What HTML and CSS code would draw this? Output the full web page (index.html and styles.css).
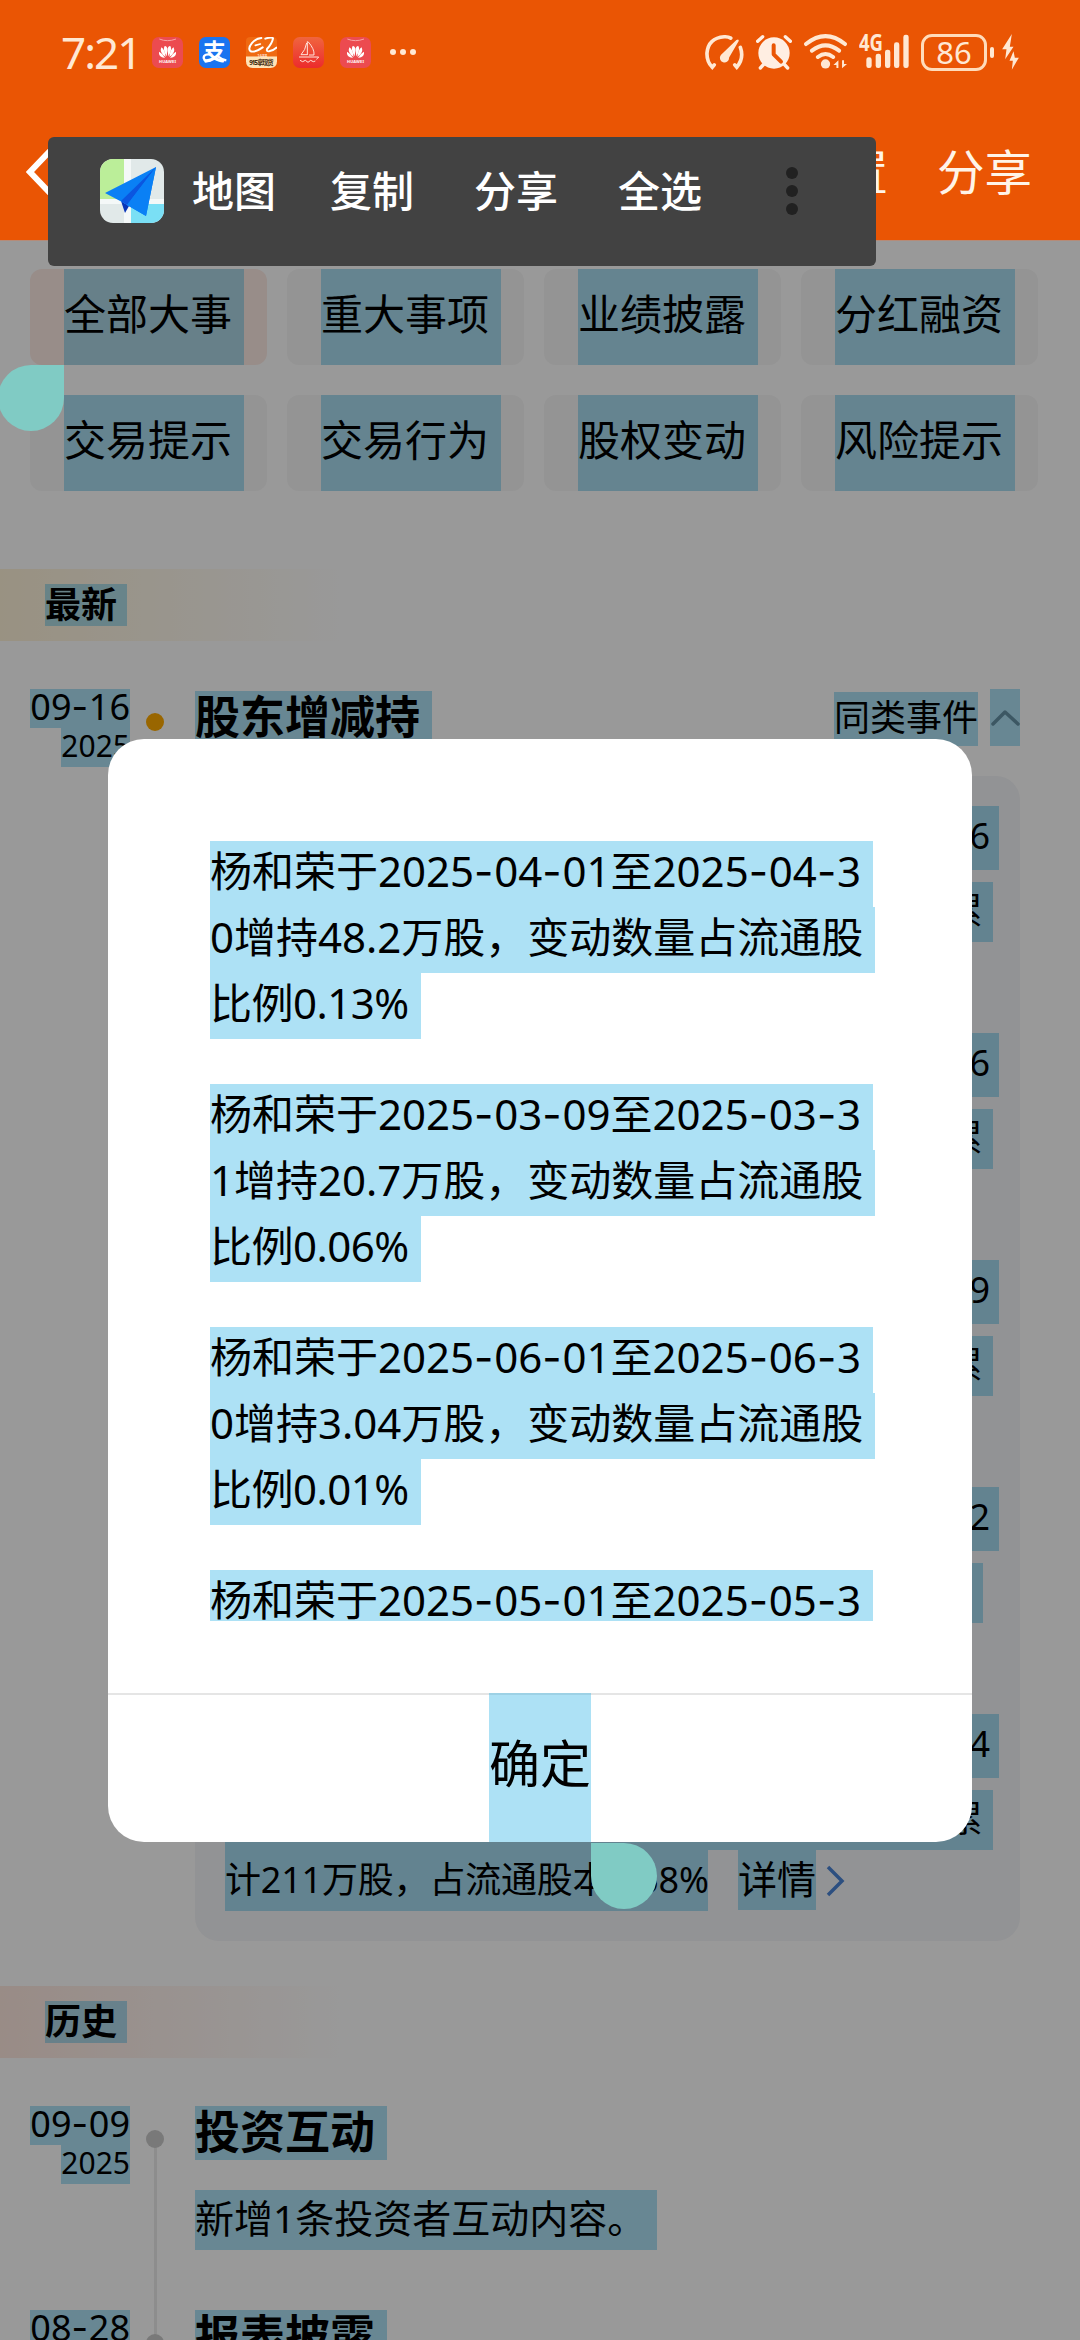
FILE: index.html
```
<!DOCTYPE html>
<html lang="zh-CN">

<head>
    <meta charset="UTF-8" />
    <meta name="viewport" content="width=device-width, initial-scale=1.0" />
    <title>大事提醒</title>
    <link rel="stylesheet" href="styles.css">
</head>

<body>
    <header class="header">
        <div class="status-bar">
            <div class="status-left">
                <span class="clock">7:21</span>
                <svg class="app-icon" viewBox="0 0 93 93">
                    <rect width="93" height="93" rx="20" fill="#ec4b50" />
                    <path d="M22 6q24 10 50 0" fill="none" stroke="#f9a5a5" stroke-width="3" />
                    <g fill="#fff">
                        <path d="M44 58Q31 38 38 27q9 0 8 14zM49 58Q62 38 55 27q-9 0-8 14z" />
                        <path d="M41 60Q21 47 28 31q10 5 13 29zM52 60Q72 47 65 31q-10 5-13 29z" />
                        <path d="M39 63Q18 60 21 44q11 5 18 19zM54 63Q75 60 72 44q-11 5-18 19z" />
                    </g>
                    <text x="21" y="79" font-size="12" font-weight="bold" fill="#fff" textLength="51">HUAWEI</text>
                </svg>
                <svg class="app-icon" viewBox="0 0 93 93">
                    <rect width="93" height="93" rx="20" fill="#1a74f0" />
                    <text x="12" y="70" font-size="68" font-weight="bold" fill="#fff">支</text>
                    <path d="M40 54Q14 48 14 63q3 14 25 5M52 55q15 12 30 15" fill="none" stroke="#fff" stroke-width="7" />
                </svg>
                <svg class="app-icon" viewBox="0 0 93 93">
                    <path d="M0 58h93v15q0 20-20 20H20Q0 93 0 73z" fill="#ffe3b8" />
                    <path d="M0 12Q0 0 14 0h65q14 0 14 12v46H0z" fill="#ef6a12" />
                    <g fill="none" stroke="#fff" stroke-linecap="round">
                        <path d="M46 3C24 4 4 30 12 41q10 9 38-10" stroke-width="6" />
                        <path d="M28 25l15-4" stroke-width="5" />
                        <path d="M58 5q20-6 23-1-2 14-18 32-2 8 6 7 12-2 22-11" stroke-width="6" />
                    </g>
                    <text x="34" y="59" font-size="13" fill="#fff">1688</text>
                    <text x="10" y="83" font-size="19" font-weight="bold" fill="#402a10" textLength="73">915拿现货</text>
                </svg>
                <svg class="app-icon" viewBox="0 0 93 93">
                    <defs>
                        <linearGradient id="boat" x2="0" y2="1">
                            <stop stop-color="#f0653f" />
                            <stop offset="1" stop-color="#ec2b2c" />
                        </linearGradient>
                    </defs>
                    <rect width="93" height="93" rx="20" fill="url(#boat)" />
                    <path d="M43 13v41M41 18Q37 40 24 53h19M45 14q20 22 18 40H48M18 60h59q-3 5-7 7M21 70l8 4 8-4 8 6 8-6 8 4 6-2" fill="none" stroke="#ffe4dc" stroke-width="3" />
                </svg>
                <svg class="app-icon" viewBox="0 0 93 93">
                    <rect width="93" height="93" rx="20" fill="#ec4b50" />
                    <path d="M22 6q24 10 50 0" fill="none" stroke="#f9a5a5" stroke-width="3" />
                    <g fill="#fff">
                        <path d="M44 58Q31 38 38 27q9 0 8 14zM49 58Q62 38 55 27q-9 0-8 14z" />
                        <path d="M41 60Q21 47 28 31q10 5 13 29zM52 60Q72 47 65 31q-10 5-13 29z" />
                        <path d="M39 63Q18 60 21 44q11 5 18 19zM54 63Q75 60 72 44q-11 5-18 19z" />
                    </g>
                    <text x="21" y="79" font-size="12" font-weight="bold" fill="#fff" textLength="51">HUAWEI</text>
                </svg>
                <svg class="more-dots" width="26" height="6" viewBox="0 0 26 6" fill="#ffe8d3">
                    <circle cx="3" cy="3" r="3" />
                    <circle cx="13" cy="3" r="3" />
                    <circle cx="23" cy="3" r="3" />
                </svg>
            </div>
            <div class="status-right">
                <svg width="39" height="36" viewBox="0 0 118 108">
                    <g fill="none" stroke="#ffe8d3" stroke-width="11" stroke-linecap="round">
                        <path d="M28 93l-6 7Q5 83 6 57 10 12 58 8q12-1 20 4" />
                        <path d="M107 40q12 33-11 60l-6-7" />
                    </g>
                    <path d="M95 18q8-5 7 3L73 71a14 14 0 1 1-25-8z" fill="#ffe8d3" />
                </svg>
                <svg width="36" height="36" viewBox="0 0 108 108">
                    <g stroke="#ffeee2" stroke-width="10" stroke-linecap="round">
                        <path d="M5 22L20 8M103 22L88 8M24 90l-11 12M84 90l11 12" />
                    </g>
                    <circle cx="54" cy="57" r="47" fill="#ffeee2" />
                    <path d="M53 34v27l22 22" fill="none" stroke="#ea5504" stroke-width="12" stroke-linecap="round" stroke-linejoin="round" />
                </svg>
                <svg width="43" height="36" viewBox="0 0 130 108">
                    <g fill="none" stroke="#ffe8d3" stroke-width="12" stroke-linecap="round">
                        <path d="M6 30Q65-18 124 30M24 50q41-32 82 0M42 69q23-18 46 0" />
                    </g>
                    <circle cx="65" cy="90" r="14" fill="#ffe8d3" />
                    <path d="M89 93l15-14v23h-6v-9zM130 90l-15 13V79h6v11z" fill="#ffe8d3" />
                </svg>
                <svg width="50" height="36" viewBox="0 0 150 108" fill="#ffe8d3">
                    <text x="0" y="52" font-size="70" font-weight="bold" textLength="72" lengthAdjust="spacingAndGlyphs">4G</text>
                    <rect x="22" y="70" width="16" height="32" rx="7" />
                    <rect x="50" y="59" width="16" height="43" rx="7" />
                    <rect x="78" y="47" width="16" height="55" rx="7" />
                    <rect x="105" y="25" width="16" height="77" rx="7" />
                    <rect x="133" y="2" width="16" height="100" rx="7" />
                </svg>
                <div class="battery">
                    <span class="battery-level">86</span>
                    <span class="battery-nub"></span>
                </div>
                <svg class="bolt" width="17" height="36" viewBox="0 0 50 108" fill="#ffe8d3">
                    <path d="M29 0L0 46h13L9 76l25-38H23z" />
                    <path d="M34 52L22 80h10l-3 27 21-36H38z" />
                </svg>
            </div>
        </div>
        <nav class="nav-bar">
            <svg class="back" width="24" height="46" viewBox="0 0 24 46">
                <path d="M24 2L4 23l20 21" fill="none" stroke="#fff" stroke-width="6" />
            </svg>
            <div class="nav-links">
                <span>设置</span>
                <span>分享</span>
            </div>
        </nav>
    </header>

    <main class="page">
        <div class="chips">
            <div class="chip active"><span class="sel">全部大事</span></div>
            <div class="chip"><span class="sel">重大事项</span></div>
            <div class="chip"><span class="sel">业绩披露</span></div>
            <div class="chip"><span class="sel">分红融资</span></div>
            <div class="chip"><span class="sel">交易提示</span></div>
            <div class="chip"><span class="sel">交易行为</span></div>
            <div class="chip"><span class="sel">股权变动</span></div>
            <div class="chip"><span class="sel">风险提示</span></div>
        </div>

        <h2 class="band latest"><span class="sel">最新</span></h2>
        <section class="event">
            <div class="date">
                <span class="sel day">09<i class="dash">-</i>16</span>
                <span class="sel year">2025</span>
            </div>
            <div class="rail"><span class="dot"></span></div>
            <div class="event-body">
                <div class="event-head">
                    <h3 class="sel title">股东增减持</h3>
                    <div class="similar">
                        <span class="sel similar-label">同类事件</span>
                        <span class="sel similar-arrow">
                            <svg width="30" height="20" viewBox="0 0 30 20">
                                <path d="M3 16L15 4l13 12" fill="none" stroke="#6592a5" stroke-width="3.5" stroke-linecap="round" stroke-linejoin="round" />
                            </svg>
                        </span>
                    </div>
                </div>
                <div class="card">
                    <div class="record">
                        <span class="sel record-head">6</span>
                        <span class="sel record-line">累</span>
                    </div>
                    <div class="record">
                        <span class="sel record-head">6</span>
                        <span class="sel record-line">累</span>
                    </div>
                    <div class="record">
                        <span class="sel record-head">9</span>
                        <span class="sel record-line">累</span>
                    </div>
                    <div class="record">
                        <span class="sel record-head">2</span>
                        <span class="sel record-line short"></span>
                    </div>
                    <div class="record">
                        <span class="sel record-head">4</span>
                        <span class="sel record-line">累</span>
                        <div class="record-more">
                            <span class="sel record-total">计211万股，占流通股本0.58%</span>
                            <span class="sel detail">详情</span>
                            <svg class="detail-arrow" width="20" height="32" viewBox="0 0 20 32">
                                <path d="M3 2l14 14L3 30" fill="none" stroke="#4a84d5" stroke-width="3.5" />
                            </svg>
                        </div>
                    </div>
                </div>
            </div>
        </section>

        <h2 class="band history"><span class="sel">历史</span></h2>
        <section class="event past">
            <div class="date">
                <span class="sel day">09<i class="dash">-</i>09</span>
                <span class="sel year">2025</span>
            </div>
            <div class="rail"><span class="dot"></span></div>
            <div class="event-body">
                <h3 class="sel title">投资互动</h3>
                <p class="sel desc">新增1条投资者互动内容。</p>
            </div>
        </section>
        <section class="event past">
            <div class="date">
                <span class="sel day">08<i class="dash">-</i>28</span>
            </div>
            <div class="rail"><span class="dot"></span></div>
            <div class="event-body">
                <h3 class="sel title">报表披露</h3>
            </div>
        </section>
        <div class="mask"></div>
    </main>

    <div class="dialog">
        <div class="dialog-list">
            <p>
                <span class="sel">杨和荣于2025<i class="dash">-</i>04<i class="dash">-</i>01至2025<i class="dash">-</i>04<i class="dash">-</i>3</span>
                <span class="sel">0增持48.2万股，变动数量占流通股</span>
                <span class="sel ratio">比例0.13%</span>
            </p>
            <p>
                <span class="sel">杨和荣于2025<i class="dash">-</i>03<i class="dash">-</i>09至2025<i class="dash">-</i>03<i class="dash">-</i>3</span>
                <span class="sel">1增持20.7万股，变动数量占流通股</span>
                <span class="sel ratio">比例0.06%</span>
            </p>
            <p>
                <span class="sel">杨和荣于2025<i class="dash">-</i>06<i class="dash">-</i>01至2025<i class="dash">-</i>06<i class="dash">-</i>3</span>
                <span class="sel">0增持3.04万股，变动数量占流通股</span>
                <span class="sel ratio">比例0.01%</span>
            </p>
            <p>
                <span class="sel">杨和荣于2025<i class="dash">-</i>05<i class="dash">-</i>01至2025<i class="dash">-</i>05<i class="dash">-</i>3</span>
            </p>
        </div>
        <div class="dialog-footer"><span class="sel">确定</span></div>
    </div>

    <div class="handle start"></div>
    <div class="handle end"></div>

    <div class="toolbar">
        <svg class="map-icon" width="64" height="64" viewBox="0 0 64 64">
            <defs>
                <clipPath id="mapClip">
                    <rect width="64" height="64" rx="13" />
                </clipPath>
            </defs>
            <g clip-path="url(#mapClip)">
                <rect width="64" height="64" fill="#e1e9e9" />
                <rect width="24" height="40" fill="#bbee99" />
                <rect x="31" y="45" width="33" height="19" fill="#7adff5" />
                <path d="M24 0h7v40h33v5H31v19h-7V45H0v-5h24z" fill="#f4f8f8" />
                <path d="M21 42l4 12 4-7z" fill="#0835b8" />
                <path d="M56 8L5 34l17 9 5 3 19 11z" fill="#0a80f5" />
                <path d="M56 8L21 42l6 4z" fill="#0b56e0" />
                <path d="M56 8L27 46l19 11z" fill="#0a80f5" />
            </g>
        </svg>
        <span class="first">地图</span>
        <span>复制</span>
        <span>分享</span>
        <span>全选</span>
        <svg class="kebab" width="12" height="48" viewBox="0 0 12 48" fill="#212121">
            <circle cx="6" cy="6" r="6" />
            <circle cx="6" cy="24" r="6" />
            <circle cx="6" cy="42" r="6" />
        </svg>
    </div>
</body>

</html>
```
FILE: styles.css
```
* {
    box-sizing: border-box;
}

body {
    position: relative;
    width: 1080px;
    height: 2340px;
    margin: 0;
    overflow: hidden;
    background: #fff;
    color: #000;
    font-family: "Noto Sans", "Noto Sans CJK SC", sans-serif;
}

h2,
h3,
p {
    margin: 0;
}

svg {
    display: block;
    flex: none;
}

/* selected text */
.sel {
    display: block;
    width: fit-content;
    background: rgba(51, 181, 229, 0.4);
    white-space: nowrap;
}

.dash {
    font-family: Inter, sans-serif;
    font-style: normal;
    letter-spacing: 0.02em;
}

/* Header */
.header {
    height: 240px;
    background: #ea5504;
    color: #fff4e8;
}

.status-bar {
    display: flex;
    justify-content: space-between;
    padding: 34px 61px 0 61px;
    height: 104px;
}

.status-left,
.status-right {
    display: flex;
    align-items: center;
    height: 36px;
}

.status-right {
    gap: 12px;
}

.clock {
    width: 91px;
    font-size: 44px;
    line-height: 36px;
    color: #ffe8d3;
    letter-spacing: -2px;
}

.app-icon {
    width: 31px;
    height: 31px;
    margin-right: 16px;
}

.more-dots {
    margin-left: 3px;
}

.battery {
    display: flex;
    align-items: center;
    gap: 3px;
}

.battery-level {
    width: 66px;
    height: 37px;
    border: 3px solid #ffdcbb;
    border-radius: 11px;
    font-size: 31px;
    line-height: 31px;
    text-align: center;
    color: #ffe8d3;
}

.battery-nub {
    width: 4px;
    height: 11px;
    border-radius: 2px;
    background: #ffe8d3;
}

.bolt {
    margin-left: -4px;
}

.nav-bar {
    display: flex;
    align-items: center;
    justify-content: space-between;
    height: 136px;
    padding: 0 48px 0 26px;
}

.nav-links {
    display: flex;
    gap: 49px;
    font-size: 47.5px;
    line-height: 60px;
}

/* Page */
.page {
    position: relative;
    height: 2100px;
    border-top: 1px solid #b58b78;
    background: #fff;
    overflow: hidden;
}

.mask {
    position: absolute;
    inset: 0;
    background: rgba(0, 0, 0, 0.4);
}

.chips {
    display: grid;
    grid-template-columns: repeat(4, 237px);
    gap: 30px 20px;
    padding: 28px 30px 78px;
}

.chip {
    height: 96px;
    padding-left: 34px;
    border-radius: 12px;
    background: #f7f7f7;
}

.chip.active {
    background: #fdebe5;
}

.chip .sel {
    height: 96px;
    padding-right: 12px;
    font-size: 42px;
    line-height: 90px;
}

.band {
    height: 72px;
    padding: 15px 45px;
}

.band .sel {
    height: 42px;
    padding-right: 10px;
    font-size: 36px;
    line-height: 41px;
}

.latest {
    background: linear-gradient(to right, #fff3d9, #fff 340px);
}

.history {
    background: linear-gradient(to right, #ffe9e0, #fff 340px);
}

.event {
    display: flex;
    padding: 48px 60px 0 30px;
}

.date {
    display: flex;
    flex-direction: column;
    align-items: flex-end;
    width: 100px;
}

.day {
    height: 39px;
    font-size: 36px;
    line-height: 35px;
}

.year {
    height: 39px;
    font-size: 30px;
    line-height: 36px;
}

.rail {
    width: 65px;
    padding: 24px 16px;
}

.dot {
    display: block;
    width: 18px;
    height: 18px;
    border-radius: 50%;
    background: #ffab00;
}

.event-body {
    flex: 1;
}

.event-head {
    display: flex;
    justify-content: space-between;
    height: 57px;
}

.title {
    height: 54px;
    padding-right: 12px;
    font-size: 45px;
    line-height: 51px;
}

.event-head .title {
    margin-top: 2px;
}

.similar {
    display: flex;
    align-items: flex-end;
    gap: 12px;
}

.similar-label {
    height: 54px;
    font-size: 36px;
    line-height: 51px;
}

.similar-arrow {
    height: 57px;
    padding-top: 19px;
}

.card {
    height: 1165px;
    margin: 30px 0 45px;
    padding: 30px 0 0 30px;
    border-radius: 24px;
    background: #f4f5f8;
}

.record {
    height: 227px;
    font-size: 36px;
}

.record-head {
    width: 774px;
    height: 64px;
    margin-bottom: 12px;
    padding-right: 9px;
    line-height: 60px;
    text-align: right;
}

.record-line {
    width: 768px;
    height: 60px;
    padding-right: 10px;
    line-height: 57px;
    text-align: right;
}

.record-line.short {
    width: 758px;
}

.record-more {
    display: flex;
    align-items: flex-start;
}

.record-total {
    width: 483px;
    height: 61px;
    line-height: 59px;
    letter-spacing: -0.2px;
}

.detail {
    height: 60px;
    margin-left: 30px;
    font-size: 39px;
    line-height: 57px;
}

.detail-arrow {
    margin: 15px 0 0 9px;
}

/* History timeline */
.past {
    height: 252px;
}

.past + .past {
    height: 204px;
    padding-top: 0;
}

.past .rail {
    background: linear-gradient(#ebebeb, #ebebeb) 24px 33px / 3px 300px no-repeat;
}

.past + .past .rail {
    background-position: 24px 0;
}

.past .dot {
    background: #cacaca;
}

.desc {
    height: 60px;
    margin-top: 30px;
    padding-right: 11px;
    font-size: 39px;
    line-height: 56px;
}

/* Dialog */
.dialog {
    position: absolute;
    top: 739px;
    left: 108px;
    width: 864px;
    height: 1103px;
    border-radius: 36px;
    overflow: hidden;
    background: #fff;
}

.dialog-list {
    height: 882px;
    margin-bottom: 72px;
    padding: 102px 102px 0;
    overflow: hidden;
}

.dialog-list p {
    margin-bottom: 45px;
}

.dialog-list .sel {
    height: 66px;
    padding-right: 12px;
    font-size: 42px;
    line-height: 60px;
}

.dialog-list .ratio {
    letter-spacing: -0.5px;
}

.dialog-footer {
    display: flex;
    justify-content: center;
    height: 149px;
    box-shadow: inset 0 2px #e5e5e5;
}

.dialog-footer .sel {
    font-size: 51px;
    line-height: 141px;
}

/* Selection handles */
.handle {
    position: absolute;
    width: 66px;
    height: 66px;
    background: #80cbc4;
}

.start {
    top: 365px;
    left: -2px;
    border-radius: 50% 0 50% 50%;
}

.end {
    top: 1843px;
    left: 591px;
    border-radius: 0 50% 50% 50%;
}

/* Floating toolbar */
.toolbar {
    position: absolute;
    top: 137px;
    left: 48px;
    display: flex;
    align-items: center;
    gap: 60px;
    width: 828px;
    height: 129px;
    padding: 0 52px 21px;
    border-radius: 6px;
    background: #424242;
    color: #fff;
    font-size: 42px;
    font-weight: 500;
    line-height: 60px;
}

.toolbar .first {
    margin: 0 -6px 0 -32px;
}

.kebab {
    margin-left: 24px;
}
```
